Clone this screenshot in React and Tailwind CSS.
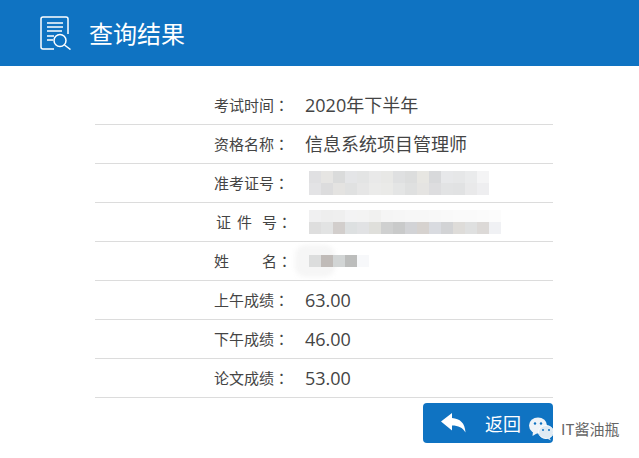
const FONT = "font-['Noto_Sans_CJK_SC','Microsoft_YaHei',sans-serif]";

function Blur({ rows, className = "" }) {
  return (
    <div className={"relative flex flex-col " + className}>
      {rows.map((r, i) => (
        <div key={i} className="flex">
          {r.map((c, j) => (
            <div key={j} className="w-3 h-3" style={{ background: c }} />
          ))}
        </div>
      ))}
    </div>
  );
}

const idRows = [
  ["#e0e0e2","#e6e5e3","#dadbdb","#e4e5e7","#e3e4e4","#e9e9e9","#e8e8e6","#dfe0e1","#dcdddd","#e7e6e2","#d8d9db","#e7e8ea","#e6e7e8","#eaebec","#f4f4f5"],
  ["#e3e3e5","#dcdcdd","#e4e3e1","#e0e1e1","#e6e6e6","#ebebea","#eaeae8","#e4e5e5","#dfe0e0","#e5e4e2","#dddddf","#e2e3e4","#e1e2e3","#e9e9ea","#eeeef0"],
];
const certRows = [
  ["#f0f0f1","#eeeeee","#efefef","#f3f3f4","#f3f3f3","#f1f1f0","#f5f5f5","#f6f6f6","#f7f7f7","#f7f7f7","#f8f8f8","#f9f9f9","#fafafa","#fafafa","#fbfbfb","#fcfcfc"],
  ["#dedede","#e2e3e3","#d2cecc","#dde0e1","#e1e2e4","#dfdfdb","#cfd0d0","#c9caca","#d2d3d6","#d6d2cf","#d9dbe0","#d2d3d5","#dedcd9","#dfe0e0","#dcd9d7","#f0f1f4"],
];
const nameRows = [
  ["#dcdddd","#c0bbb8","#d2d5d5","#bcbdbc","#f7f8fa"],
];

const valueCls = "text-[18px] text-[#444444] font-['Open_Sans','Noto_Sans_CJK_SC',sans-serif]";

function Colon() {
  return <span className="font-['Noto_Sans_CJK_TC',sans-serif]">：</span>;
}

function Row({ label, children }) {
  return (
    <div className="h-[39px] flex items-center pl-[119px] border-b border-[#dcdcdc]">
      <div className="w-[91px] shrink-0 text-[15px] text-[#444444] flex">
        {label}
        <Colon />
      </div>
      {children}
    </div>
  );
}

function Spaced({ items }) {
  return items.map(([t, cls], i) => (
    <span key={i} className={cls}>{t}</span>
  ));
}

export default function App() {
  return (
    <div className={"relative w-[639px] h-[458px] bg-white overflow-hidden " + FONT}>
      <header className="h-[66px] bg-[#0f73c2] flex items-center pl-[40px] gap-[17px]">
        <svg width="32" height="34" viewBox="0 0 32 34" fill="none" stroke="white" strokeWidth="1.5">
          <path d="M14 33H3a2 2 0 0 1-2-2V3a2 2 0 0 1 2-2h23a2 2 0 0 1 2 2v15" />
          <path d="M7 7h16M7 11h16M7 15h15M7 20h7M7 24h6" />
          <circle cx="20" cy="24.5" r="6" />
          <path d="M24.5 29l6 4.5" />
        </svg>
        <div className="text-white text-[24px] leading-none">查询结果</div>
      </header>

      <main className="ml-[95px] w-[458px] pt-[20px]">
        <Row label="考试时间">
          <div className={valueCls}>2020年下半年</div>
        </Row>
        <Row label="资格名称">
          <div className={valueCls}>信息系统项目管理师</div>
        </Row>
        <Row label="准考证号">
          <Blur rows={idRows} className="ml-[4px]" />
        </Row>
        <Row label={<Spaced items={[["证","ml-[2px]"],["件","ml-[6px]"],["号","ml-[10px]"]]} />}>
          <Blur rows={certRows} className="ml-[4px]" />
        </Row>
        <Row label={<Spaced items={[["姓",""],["名","ml-[33px]"]]} />}>
          <div className="relative ml-[4px]">
            <div className="absolute left-[-14px] top-[-10px] w-[40px] h-[32px] rounded-[10px] bg-[#f6f6f6] blur-[2px]" />
            <Blur rows={nameRows} />
          </div>
        </Row>
        <Row label="上午成绩">
          <div className={valueCls}>63.00</div>
        </Row>
        <Row label="下午成绩">
          <div className={valueCls}>46.00</div>
        </Row>
        <Row label="论文成绩">
          <div className={valueCls}>53.00</div>
        </Row>
        <div className="flex justify-end pt-[5px]">
          <button className="w-[130px] h-[40px] bg-[#0f73c2] rounded-[4px] flex items-center pl-[18px] text-white text-[18px]">
            <svg width="25" height="20" viewBox="0 0 25 20" fill="white">
              <path d="M0 8.5 L11 0 V5 C19 5.5 24 10 24.5 19.5 C21.5 14.5 17.5 12.5 11 12.5 V17.5 Z" />
            </svg>
            <span className="ml-[19px]">返回</span>
          </button>
        </div>
      </main>

      <div className="absolute left-[529px] top-[417px] flex items-center">
        <svg width="25" height="24" viewBox="0 0 25 24">
          <ellipse cx="9" cy="8.5" rx="9" ry="8" fill="#eef3f8" />
          <path d="M4 14l-0.5 5 5-3z" fill="#eef3f8" />
          <circle cx="6" cy="6.5" r="1.2" fill="#0f73c2" />
          <circle cx="12" cy="6.5" r="1.2" fill="#0f73c2" />
          <ellipse cx="17" cy="15" rx="7.5" ry="6.5" fill="#dfeaf3" stroke="#ffffff" strokeWidth="1" />
          <path d="M20 20l2 3.5-5-2.5z" fill="#dfeaf3" />
          <circle cx="14" cy="13" r="1" fill="#0f73c2" />
          <circle cx="20" cy="13" r="1" fill="#0f73c2" />
        </svg>
      </div>
      <div className="absolute left-[561px] top-[420px] text-[15px] leading-[18px] text-[#666666] whitespace-nowrap">IT酱油瓶</div>
    </div>
  );
}
